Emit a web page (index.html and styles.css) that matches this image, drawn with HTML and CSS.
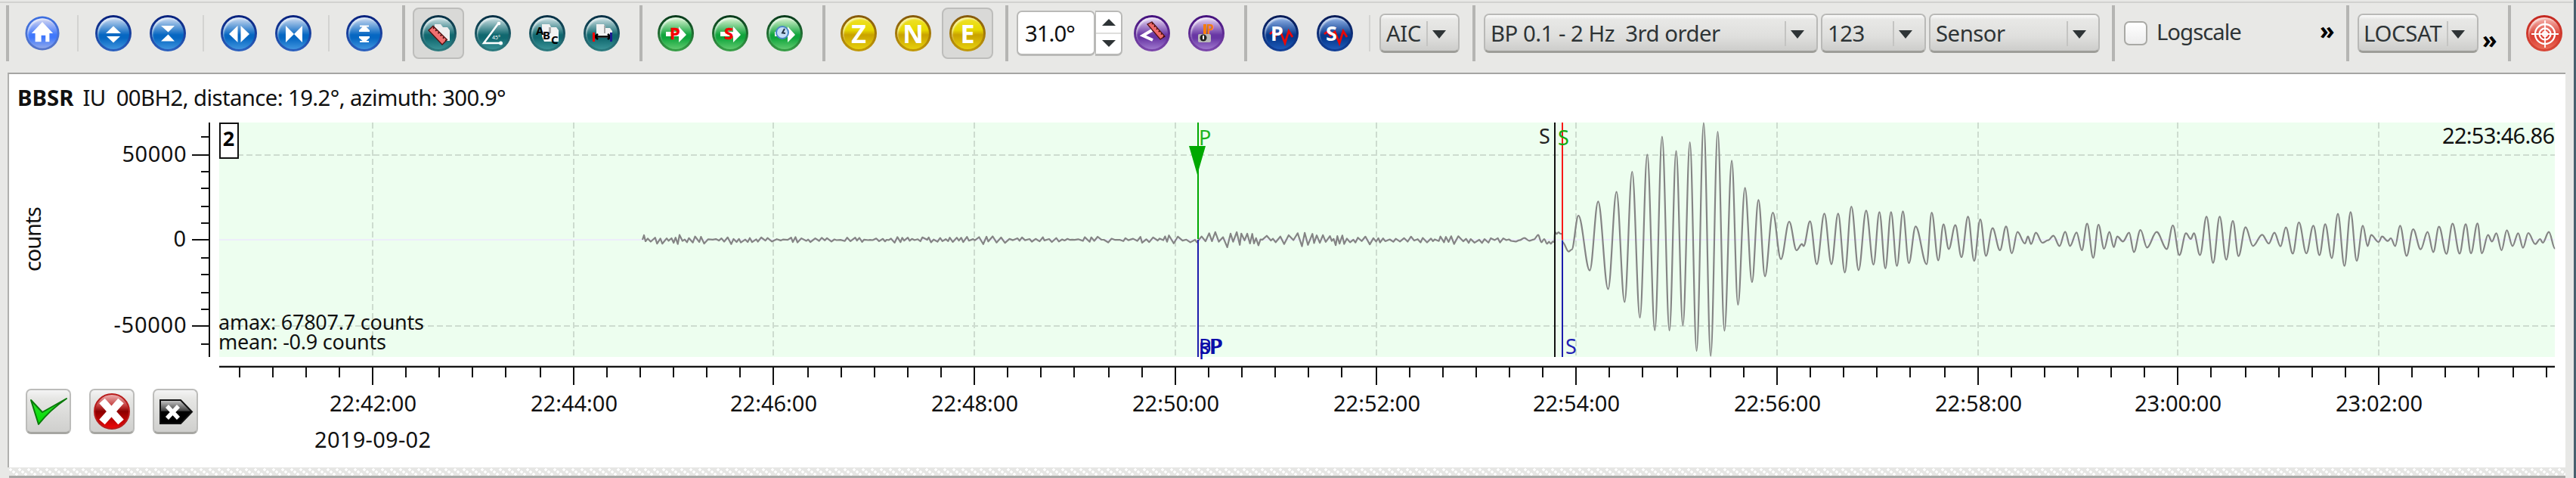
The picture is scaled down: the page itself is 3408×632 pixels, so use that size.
FILE: index.html
```html
<!DOCTYPE html>
<html lang="en">
<head>
<meta charset="utf-8">
<title>BBSR picker</title>
<link rel="stylesheet" href="styles.css">
</head>
<body>
<div class="window">
<header class="toolbar">
  <section class="group g-view">
    <button class="tool"><span class="ball home"><svg viewBox="0 0 48 48"><path fill="#fff" d="M24 8 L39 24 H34 V36 H28.500 V27 H22.500 V36 H14 V24 H9 Z"/></svg></span></button>
    <i class="sep"></i>
    <button class="tool"><span class="ball blue"><svg viewBox="0 0 48 48"><path fill="#fff" d="M24 14.500 L34 24 H14 Z M15 28 H33 L24 36.500 Z"/></svg></span></button>
    <button class="tool"><span class="ball blue"><svg viewBox="0 0 48 48"><path fill="#fff" d="M15 14 H33 L24.500 22.500 Z M24.500 25.500 L33 34.500 H15 Z"/></svg></span></button>
    <i class="sep"></i>
    <button class="tool"><span class="ball blue"><svg viewBox="0 0 48 48"><path fill="#fff" d="M22.500 14 V36 L11 25 Z M26.500 14 V36 L38 25 Z"/></svg></span></button>
    <button class="tool"><span class="ball blue"><svg viewBox="0 0 48 48"><path fill="#fff" d="M14 14 V36 L25 25 Z M36 14 V36 L25 25 Z"/></svg></span></button>
    <i class="sep"></i>
    <button class="tool"><span class="ball blue"><svg viewBox="0 0 48 48"><path fill="#fff" d="M18 13.500 H30 V15.500 H26.500 L31 20 V22 H17 V20 L21.500 15.500 H18 Z M17 28 H31 V30 L26.500 34 H30 V36 H18 V34 H21.500 L17 30 Z"/></svg></span></button>
  </section>
  <section class="group g-measure">
    <button class="tool on"><span class="ball teal"><svg viewBox="0 0 48 48"><path fill="#eee" d="M19 12 H27 L30 16 H36 L39 20 V34 H32 L19 20 Z"/><path fill="#f07070" stroke="#501010" stroke-width="1.300" d="M11 20 L17 14.500 L35.500 32.500 L29 39 Z"/><path stroke="#200" stroke-width="1.600" stroke-dasharray="1.600 3" d="M17 16.500 L34 33.500"/></svg></span></button>
    <button class="tool"><span class="ball teal"><svg viewBox="0 0 48 48"><path fill="none" stroke="#fff" stroke-width="2.500" d="M32 10 L12 37 H35"/><circle cx="32" cy="11" r="2.300" fill="#fff"/><circle cx="34.500" cy="37" r="2.500" fill="#fff"/><text x="23" y="32" font-size="7" fill="#fff">45°</text></svg></span></button>
    <button class="tool"><span class="ball teal"><svg viewBox="0 0 48 48"><path fill="#f2f2f2" d="M17 12 H27 L29 16 H36 L39 20 V35 H20 L17 28 Z"/><path fill="#aaa" d="M26 16 h3 v8 h-3z"/><g font-size="15" font-weight="700"><text x="9" y="26">A</text><text x="18" y="32">B</text><text x="29" y="38">C</text></g></svg></span></button>
    <button class="tool"><span class="ball teal"><svg viewBox="0 0 48 48"><path fill="#f2f2f2" d="M17 12 H27 L29 17 H35 L38 21 V30 H17 Z"/><path fill="#aaa" d="M27 14 h2 v10 h-2z"/><path stroke="#000" stroke-width="2.500" fill="none" d="M14 28.500 H36 M19 25 L15 28.500 L19 32 M32 25 L36 28.500 L32 32"/><path fill="#f00" d="M12 23 h3v12h-3z"/><path fill="#1b1b90" d="M35 23 h3v12h-3z"/></svg></span></button>
  </section>
  <section class="group g-pick">
    <button class="tool"><span class="ball green"><svg viewBox="0 0 48 48"><path class="arrow" d="M11 22 H28 V15 L38 26 L28 36 V28 H11 Z"/><text class="pick" x="16" y="32">P</text></svg></span></button>
    <button class="tool"><span class="ball green"><svg viewBox="0 0 48 48"><path class="arrow" d="M11 22 H28 V15 L38 26 L28 36 V28 H11 Z"/><text class="pick" x="16" y="32">S</text></svg></span></button>
    <button class="tool"><span class="ball green"><svg viewBox="0 0 48 48"><path class="arrow" d="M11 22 H28 V15 L38 26 L28 36 V28 H11 Z"/><circle cx="21" cy="23" r="8" fill="#c5def5" stroke="#4a86c8" stroke-width="2"/><path fill="none" stroke="#234" stroke-width="2" d="M24 18 L21 23.500 L25 24"/></svg></span></button>
  </section>
  <section class="group g-comp">
    <button class="tool"><span class="ball gold"><svg viewBox="0 0 48 48"><text class="comp" x="24" y="37">Z</text></svg></span></button>
    <button class="tool"><span class="ball gold"><svg viewBox="0 0 48 48"><text class="comp" x="24" y="37">N</text></svg></span></button>
    <button class="tool on"><span class="ball gold"><svg viewBox="0 0 48 48"><text class="comp" x="24" y="37">E</text></svg></span></button>
  </section>
  <section class="group g-angle">
    <div class="spin"><span class="spin-value">31.0°</span><span class="spin-steps"><i class="up"></i><i class="down"></i></span></div>
    <button class="tool"><span class="ball violet"><svg viewBox="0 0 48 48"><path fill="none" stroke="#fff" stroke-width="4" d="M24 20 L12 27 L25 33"/><path fill="#f06a6a" stroke="#501010" stroke-width="1.300" d="M18 12 L24 9 L41 28 L35 32 Z"/><path stroke="#300" stroke-width="1.500" stroke-dasharray="1.500 3" d="M24 11 L40 29"/></svg></span></button>
    <button class="tool"><span class="ball violet"><svg viewBox="0 0 48 48"><path fill="#f57c10" d="M20 12 h4v14h-4z"/><text x="24" y="25" font-size="17" font-weight="700" fill="#f57c10" textLength="10" lengthAdjust="spacingAndGlyphs">P</text><rect x="13" y="25" width="17" height="11" rx="2" fill="#b9b9b9"/><circle cx="20" cy="30" r="4.500" fill="#222"/><path fill="#fff" d="M19 27 h2v5h-2z"/></svg></span></button>
  </section>
  <section class="group g-auto">
    <button class="tool"><span class="ball navy"><svg viewBox="0 0 48 48"><path class="wave" d="M10 25 L14 22 L18 27 L24 22 L30 37 L35 21 L40 29"/><text class="auto" x="11" y="34">P</text></svg></span></button>
    <button class="tool"><span class="ball navy"><svg viewBox="0 0 48 48"><path class="wave" d="M10 25 L14 22 L18 27 L24 22 L30 37 L35 21 L40 29"/><text class="auto" x="12" y="34">S</text></svg></span></button>
    <i class="sep"></i>
    <div class="combo c-aic"><span>AIC</span></div>
  </section>
  <section class="group g-filter">
    <div class="combo c-filter"><span>BP 0.1 - 2 Hz&nbsp; 3rd order</span></div>
    <div class="combo c-rot"><span>123</span></div>
    <div class="combo c-unit"><span>Sensor</span></div>
  </section>
  <section class="group g-log">
    <i class="check"></i><span class="check-label">Logscale</span><b class="more more-a">»</b>
  </section>
  <section class="group g-loc">
    <div class="combo c-loc"><span>LOCSAT</span></div><b class="more more-b">»</b>
  </section>
  <section class="group g-target">
    <button class="tool"><span class="ball red"><svg viewBox="0 0 48 48"><g fill="none" stroke="#fff"><circle cx="25" cy="25" r="13" stroke-width="2.300"/><circle cx="25" cy="25" r="7.500" stroke-width="2.300"/><circle cx="25" cy="25" r="3" stroke-width="2"/><path stroke-width="1.800" d="M25 7 V43 M7 25 H43"/></g></svg></span></button>
  </section>
</header>
<main class="panel">
  <h1 class="station"><b>BBSR</b><span>IU&nbsp; 00BH2, distance: 19.2°, azimuth: 300.9°</span></h1>
  <svg class="chart" viewBox="12 160 3382 350" width="3382" height="350">
    <rect x="290" y="162" width="3090" height="310" fill="#edfeef"/>
    <g id="grid"></g>
    <rect x="290" y="316" width="3090" height="2" fill="#ededfb"/>
    <path id="trace" fill="none" stroke="#848484" stroke-width="2.200" stroke-linejoin="round"/>
    <path fill="#00a800" d="M1584 162 h2 v154 h-2 z M1573 193 h22 l-11 38 z"/>
    <path fill="#1c1cac" d="M1584 317 h2 v155 h-2 z"/>
    <path fill="#111" d="M2056 162 h2 v310 h-2 z"/>
    <path fill="#f81818" d="M2066 162 h2 v155 h-2 z"/>
    <path fill="#1c1cac" d="M2066 318 h2 v154 h-2 z"/>
    <g class="phase">
      <text x="1586" y="192" fill="#1db31d">P</text>
      <text x="2036" y="190" fill="#222">S</text>
      <text x="2061" y="192" fill="#12ab12">S</text>
      <g fill="#0a0aa8"><text x="1586" y="468">P</text><text x="1586" y="468" textLength="32">pP</text><text x="1587" y="468" textLength="29">sP</text></g>
      <text x="2071" y="468" fill="#2222b4">S</text>
      <text x="289" y="436" textLength="272" fill="#111">amax: 67807.7 counts</text>
      <text x="289" y="462" textLength="222" fill="#111">mean: -0.9 counts</text>
    </g>
    <text class="axis-label" x="3231" y="190" textLength="149">22:53:46.86</text>
    <rect x="291" y="163" width="24" height="46" fill="#fff" stroke="#111" stroke-width="2"/>
    <text class="badge" x="302.500" y="193">2</text>
    <text class="axis-label" transform="translate(53.500 359) rotate(-90)" textLength="86">counts</text>
    <g id="yaxis"></g>
  </svg>
  <div class="footer">
    <div class="actions">
      <button class="act"><svg viewBox="0 0 60 60"><defs><linearGradient id="gr" x2="0" y2="1"><stop offset="0" stop-color="#30e030"/><stop offset="1" stop-color="#00dc00"/></linearGradient></defs><path fill="url(#gr)" stroke="#0a7a0a" stroke-width="2" d="M7 15 L22 31 L54 13 Q32 28 17 47 Z" stroke-linejoin="round"/></svg></button>
      <button class="act"><svg viewBox="0 0 60 60"><defs><linearGradient id="rd" x2="0" y2="1"><stop offset="0" stop-color="#f0b8b8"/><stop offset=".35" stop-color="#c03838"/><stop offset=".5" stop-color="#8c0000"/><stop offset="1" stop-color="#f00808"/></linearGradient></defs><circle cx="30" cy="30" r="23" fill="url(#rd)" stroke="#b81c1c" stroke-width="2"/><path stroke="#fff" stroke-width="10" d="M17 16 L42 44 M42 16 L17 44"/></svg></button>
      <button class="act"><svg viewBox="0 0 60 60"><defs><linearGradient id="bk" x2="0" y2="1"><stop offset="0" stop-color="#ccc"/><stop offset=".45" stop-color="#444"/><stop offset=".5" stop-color="#000"/></linearGradient></defs><path fill="url(#bk)" stroke="#111" stroke-width="2" d="M10 15 H37 L52 30.500 L37 46 H10 Z"/><path stroke="#fff" stroke-width="5.500" d="M19 23 L34 39 M34 23 L19 39"/></svg></button>
    </div>
    <svg class="time-axis" viewBox="290 482 3104 136" width="3104" height="136"><g id="xaxis"></g><text class="axis-label" x="416" y="592" textLength="154">2019-09-02</text></svg>
  </div>
</main>
<div class="splitter"></div>
</div>
<script src="chart.js"></script>
</body>
</html>
```
FILE: styles.css
```css
* { box-sizing: border-box; }
body { margin: 0; background: #e8e8e6; font-family: "Noto Sans", "Open Sans", sans-serif; font-size: 29.33px; color: #111; }
.window { width: 3408px; height: 632px; overflow: hidden; border-right: 3px solid #48606e; }
.toolbar { height: 96px; width: 3404px; display: flex; padding: 2px 0 0 8px; background: linear-gradient(#d2d2d0, #d2d2d0) 0 2px / 3404px 2px no-repeat; }
.group { display: flex; flex: none; align-items: center; height: 84px; padding-left: 10px; border-left: 4px solid #b7b7b5; border-image: linear-gradient(transparent 7%, #b5b5b3 7%, #b5b5b3 92.800%, transparent 92.800%) 1; border-width: 0 0 0 4px; }
.g-view { width: 524px; } .g-measure { width: 314px; } .g-pick { width: 242px; } .g-comp { width: 242px; }
.g-angle { width: 316px; } .g-auto { width: 302px; } .g-filter { width: 846px; } .g-log { width: 310px; } .g-loc { width: 214px; } .g-target { width: 86px; }
.tool { flex: none; width: 68px; height: 68px; margin: 0 4px 0 0; padding: 0; border: 2px solid transparent; border-radius: 8px; background: none; display: flex; align-items: center; justify-content: center; }
.tool.on { background: #d9d9d7; border-color: #bdbdbb; }
.sep { flex: none; width: 2px; height: 48px; margin: 0 12px 0 8px; background: #d3d3d1; }
.ball { position: relative; width: 48px; height: 48px; border-radius: 50%; padding: 3px; background: linear-gradient(var(--edge), var(--rim)); }
.ball::before { content: ""; display: block; width: 42px; height: 42px; border-radius: 50%; background: linear-gradient(var(--light) 8%, var(--mid) 55%, var(--mid) 65%, var(--low)); box-shadow: inset 2px 3px 2px -1px rgba(255,255,255,.6); }
.ball svg { position: absolute; inset: 0; width: 48px; height: 48px; }
.blue { --edge: #06207c; --rim: #2c62c0; --light: #b4cdec; --mid: #0667c2; --low: #3f94de; }
.teal { --edge: #052e44; --rim: #2d7c80; --light: #b6d2d6; --mid: #10686f; --low: #399195; }
.green { --edge: #06381a; --rim: #38a048; --light: #c2eac0; --mid: #10a53c; --low: #5fc96e; }
.gold { --edge: #85580a; --rim: #c29a08; --light: #f3ea70; --mid: #d4b400; --low: #e6cf10; }
.gold::before { background: linear-gradient(#f0e22c, #e6d800 40%, #c9a200 55%, #e6cf0c); }
.violet { --edge: #43107c; --rim: #7c48ac; --light: #d8c4ea; --mid: #6836a4; --low: #9d76cc; }
.navy { --edge: #061a55; --rim: #124098; --light: #7fa3dc; --mid: #06388c; --low: #1e5ab8; }
.red { --edge: #c42820; --rim: #d84838; --light: #f2a8a0; --mid: #dc4034; --low: #ea6c58; }
.home { --edge: #3b6ee0; --rim: #5474c8; --light: #c2cbf2; --mid: #4078fc; --low: #90a8ea; transform: scale(.94); }
.arrow { fill: #fff; }
.pick { font-size: 22px; font-weight: 700; fill: #f50000; stroke: #f50000; stroke-width: .5; }
.comp { font-size: 34px; font-weight: 700; fill: #fff; text-anchor: middle; }
.auto { font-size: 27px; font-weight: 700; fill: #fff; }
.wave { fill: none; stroke: #e80808; stroke-width: 2.800; }
.spin { flex: none; display: flex; width: 140px; height: 60px; margin: 0 5px 0 1px; }
.spin-value { width: 104px; height: 60px; padding-left: 9px; line-height: 56px; border: 2px solid #b9b9b7; border-bottom-width: 3px; border-radius: 7px; background: #fff; letter-spacing: -1px; white-space: nowrap; }
.spin-steps { width: 36px; height: 60px; display: flex; flex-direction: column; border: 2px solid #b9b9b7; border-left-width: 1px; border-bottom-width: 3px; border-radius: 0 7px 7px 0; background: #fff; }
.spin-steps i { flex: 1; display: flex; align-items: center; justify-content: center; }
.spin-steps .up { border-bottom: 2px solid #dededc; }
.spin-steps i::before { content: ""; border: 9px solid transparent; border-top-width: 0; border-bottom: 9px solid #2e3436; }
.spin-steps .down::before { border-bottom-width: 0; border-top: 9px solid #2e3436; }
.combo { position: relative; flex: none; display: flex; height: 52px; align-items: center; padding-left: 7px; border: 2px solid #b9b9b7; border-bottom: 3px solid #9d9d98; border-radius: 7px; background: linear-gradient(#fbfbfb, #e8e8e6 12%, #dfdfdd 60%, #cdcdcb); color: #2e3436; white-space: nowrap; letter-spacing: -.5px; }
.combo::before { content: ""; position: absolute; right: 40px; top: 8px; width: 2px; height: 33px; background: #c4c4c2; }
.combo::after { content: ""; position: absolute; right: 16px; top: 20px; border: 9.500px solid transparent; border-top: 11px solid #2e3436; border-bottom: 0; }
.c-aic { width: 106px; margin-left: 0; } .g-auto .sep { margin: 0 12px 0 7px; }
.c-filter { width: 442px; margin: 0 4px 0 1px; } .c-rot { width: 139px; margin-right: 4px; } .c-unit { width: 226px; } .c-loc { width: 160px; margin-left: 1px; }
.c-loc { padding-left: 6px; letter-spacing: -.3px; }
.c-loc::before { right: 38px; }
.check { width: 31px; height: 32px; margin-left: 2px; border: 2px solid #a9a9a5; border-radius: 7px; background: linear-gradient(#fff, #ededed); }
.check-label { margin: -5px 0 0 12px; color: #2e3436; width: 216px; letter-spacing: -1px; }
.more { font-size: 32px; font-weight: 700; line-height: 40px; color: #000; }
.more-a { margin-top: -8px; margin-left: 0; } .more-b { margin: 15px 0 0 5px; }
.panel { margin-left: 10px; width: 3384px; height: 522px; background: #fff; border-top: 2px solid #a5a5a3; border-left: 2px solid #b0b0ae; display: flex; flex-direction: column; }
.station { margin: 0; height: 62px; padding: 11px 0 0 11px; font-size: 29.33px; line-height: 40px; font-weight: 400; display: flex; gap: 12px; white-space: nowrap; }
.station span { letter-spacing: -.6px; }
.chart { flex: none; margin-bottom: -28px; display: block; }
.footer { display: flex; height: 136px; flex: none; }
.actions { width: 278px; display: flex; gap: 24px; padding: 32px 0 0 22px; }
.act { width: 60px; height: 60px; padding: 0; border: 2px solid #bcbcba; border-bottom: 3px solid #a6a6a2; border-radius: 7px; background: linear-gradient(#f4f4f4, #e6e6e4 20%, #cfcfcd); display: flex; align-items: center; justify-content: center; }
.act svg { flex: none; width: 60px; height: 60px; margin-top: 1px; }
svg text { font-family: "Noto Sans", "Open Sans", sans-serif; }
.axis-label { font-size: 29px; fill: #111; }
.phase { font-size: 27px; }
.badge { font-size: 27px; font-weight: 700; text-anchor: middle; }
.splitter { margin-left: 12px; width: 3382px; height: 14px; border-bottom: 3px solid #a8a8a6; background: radial-gradient(circle at 2px 3px, #fff 1.500px, transparent 2px), radial-gradient(circle at 6px 6px, #fff 1.500px, transparent 2px), radial-gradient(circle at 10px 9px, #fff 1.500px, transparent 2px), #e6e6e4; background-size: 12px 12px; }
```
FILE: chart.js
```js
const NS = 'http://www.w3.org/2000/svg';
function add(parent, tag, attrs, text) {
  const node = document.createElementNS(NS, tag);
  for (const k in attrs) node.setAttribute(k, attrs[k]);
  if (text) node.textContent = text;
  parent.appendChild(node);
}
const byId = id => document.getElementById(id);

// Time axis: a major tick every two minutes, split by minor ticks
const times = ['22:42:00', '22:44:00', '22:46:00', '22:48:00', '22:50:00', '22:52:00', '22:54:00', '22:56:00', '22:58:00', '23:00:00', '23:02:00'];
const xaxis = byId('xaxis'), yaxis = byId('yaxis'), grid = byId('grid');
add(xaxis, 'path', { d: 'M290 483.5H3380', stroke: '#b8b8b8', 'stroke-width': 1 });
add(xaxis, 'path', { d: 'M290 485H3380', stroke: '#111', 'stroke-width': 2 });
for (let i = -4; i <= 65; i++) {
  const x = 2 * Math.round((493 + i * 44.235 - 1) / 2) + 1;
  if (x > 3379) break;
  const major = i >= 0 && i % 6 === 0;
  add(xaxis, 'path', { d: `M${x} 485V${major ? 509 : 499}`, stroke: '#111', 'stroke-width': 2 });
  if (major) {
    add(xaxis, 'text', { class: 'axis-label', x: x - 57, y: 543.5, textLength: 115 }, times[i / 6]);
    add(grid, 'path', { d: `M${x} 162V472`, stroke: '#cddccf', 'stroke-width': 2, 'stroke-dasharray': '8 4' });
  }
}
for (const y of [205, 431]) add(grid, 'path', { d: `M290 ${y}H3380`, stroke: '#cddccf', 'stroke-width': 2, 'stroke-dasharray': '8 4' });

// Amplitude axis
add(yaxis, 'path', { d: 'M277 162V472', stroke: '#111', 'stroke-width': 2 });
for (const y of [181, 227, 249, 273, 295, 341, 363, 387, 409, 455]) add(yaxis, 'path', { d: `M266 ${y}H277`, stroke: '#111', 'stroke-width': 2 });
for (const [y, label, w] of [[205, '50000', 85], [317, '0', 17], [431, '-50000', 96]]) {
  add(yaxis, 'path', { d: `M254 ${y}H277`, stroke: '#111', 'stroke-width': 2 });
  add(yaxis, 'text', { class: 'axis-label', x: 246.5 - w, y: y + 9, textLength: w }, label);
}

// Background noise before the S arrival, shaped by an amplitude envelope
let seed = 20190902;
const rnd = () => (seed = (seed * 1103515245 + 12345) % 2147483648) / 2147483648;
const env = [[850, 4], [905, 5], [960, 3], [975, 6], [990, 3], [1100, 2.5], [1180, 2.5], [1190, 5], [1210, 3], [1285, 3], [1295, 5.5], [1320, 3.5], [1350, 2.5], [1430, 3], [1445, 4], [1480, 2.5], [1500, 4.5], [1580, 4.5], [1596, 6], [1599, 11], [1615, 7], [1638, 10], [1655, 6], [1668, 11], [1680, 5], [1690, 9], [1705, 6], [1719, 8], [1750, 5], [1780, 6], [1830, 5], [1880, 4], [1930, 4.5], [1938, 7], [1950, 4], [2000, 2.5], [2030, 3], [2045, 6]];
const amp = x => {
  for (let i = 1; i < env.length; i++) if (x <= env[i][0]) {
    const [a, u] = env[i - 1], [b, v] = env[i];
    return u + (v - u) * (x - a) / (b - a);
  }
  return 3;
};
let d = 'M850 317L852 311L854 319';
for (let x = 857, s = -1; x < 2004; s = -s) {
  d += `L${x.toFixed(1)} ${(317 + s * amp(x) * (1.35 * rnd() - 0.05)).toFixed(1)}`;
  x += 2 + 4.5 * rnd();
}

// Surface wave extremes as x,y pairs, relative to the plot section they belong to
const early = '15,538 28,533 47,524 65,535 82,530 98,512 110,541 120,528 131,547 138,539 145,547 152,538 158,540 160,500 166,508 173,501 180,507 187,508 188,540 211,578 222,570 247,435 289,653 320,379 357,727 388,341 418,778 446,261 475,840 502,193 530,890 557,122 584,891 609,179 634,871 660,144 685,972 711,68 737,992 763,102 788,892 815,217 838,789 864,325 890,699 914,373 938,676 967,423 997,608 1028,459 1055,573 1075,548 1081,556 1105,458 1130,628 1158,427 1184,628 1209,427 1234,661 1258,399 1285,652 1313,415 1340,630 1362,421 1384,645 1405,421 1427,635 1449,418 1471,624 1496,478 1537,628';
const late = '96,183 111,373 123,230 135,328 150,233 164,360 179,199 193,375 207,210 220,355 235,245 252,333 266,238 279,345 292,260 309,306 316,278 323,308 334,263 349,303 362,293 374,275 388,316 401,259 412,316 427,262 439,333 451,227 465,363 477,231 490,327 502,260 512,320 520,278 533,298 547,263 558,340 573,252 588,322 610,260 633,328 647,234 662,352 677,265 688,288 695,265 709,352 724,199 739,383 754,199 769,370 784,216 797,356 813,241 830,316 851,271 866,306 879,263 893,317 905,242 921,346 935,222 952,345 968,235 982,352 995,229 1010,364 1024,188 1039,395 1053,181 1067,375 1081,235 1092,316 1100,272 1117,300 1125,278 1138,296 1145,285 1155,316 1166,235 1181,355 1196,249 1213,329 1229,260 1242,340 1255,239 1272,347 1286,227 1302,346 1316,229 1328,345 1343,226 1353,345 1367,272 1376,298 1386,265 1398,333 1410,253 1423,316 1436,265 1447,323 1459,264 1475,308 1486,288 1492,303 1506,260 1520,326';
const parse = (s, x0, sx, y0) => s.split(' ').map(p => p.split(',').map(Number)).map(([x, y]) => [x0 + x / sx, y0 + y / 3]);
const wave = [...parse(early, 2000, 2.8, 140), ...parse(late, 2500, 1.7269, 220)];
let [px, py] = wave[0];
d += `L${px} ${py}`;
for (const [x, y] of wave.slice(1)) {
  const h = (x - px) * 0.36;
  d += `C${(px + h).toFixed(1)} ${py.toFixed(1)} ${(x - h).toFixed(1)} ${y.toFixed(1)} ${x.toFixed(1)} ${y.toFixed(1)}`;
  [px, py] = [x, y];
}
byId('trace').setAttribute('d', d);
```
